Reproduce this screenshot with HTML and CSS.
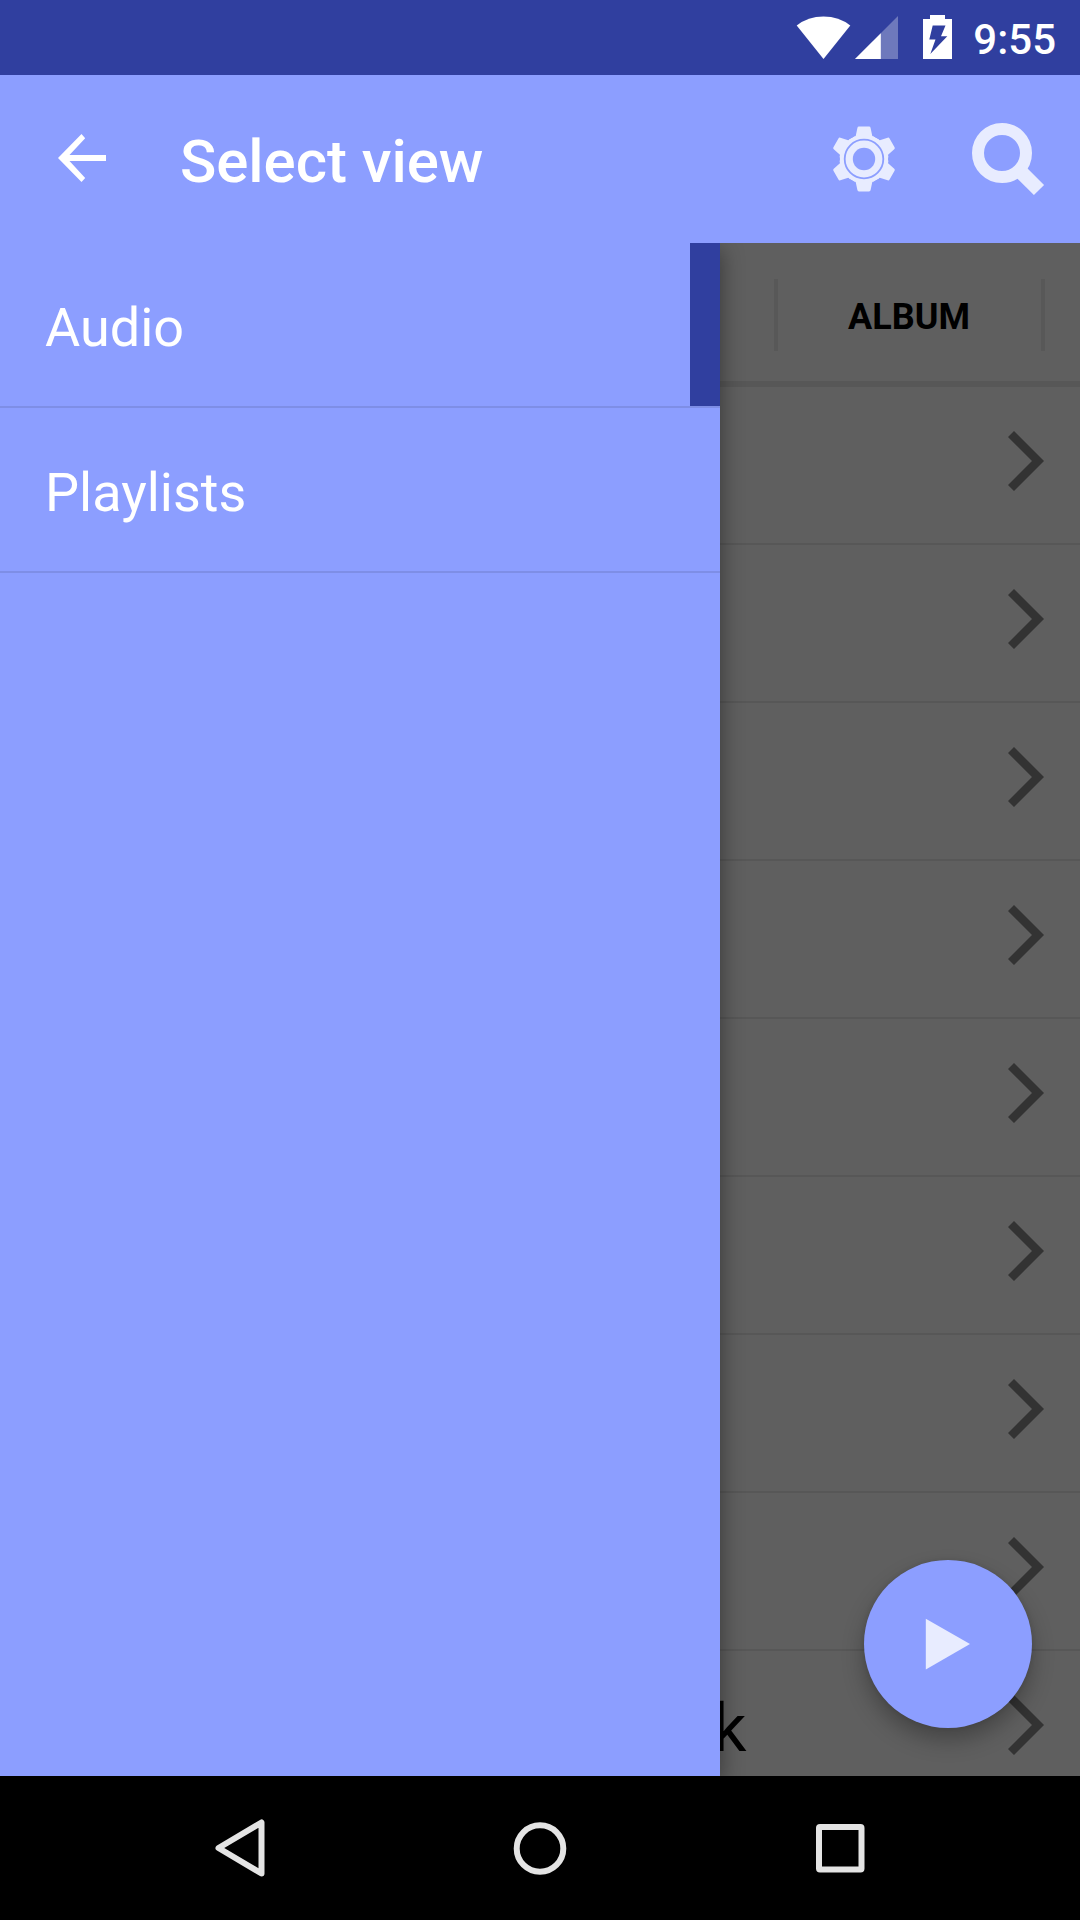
FILE: index.html
```html
<!DOCTYPE html>
<html lang="en">
<head>
<meta charset="utf-8">
<title>Select view</title>
<link rel="stylesheet" href="styles.css">
</head>
<body>
<div class="screen">
  <div class="status-bar">
    <svg class="status-icons" viewBox="790 0 170 75" width="170" height="75">
      <path fill="#fff" d="M823.5 59 796.7 25.5Q808 16.5 823.5 16.5T850.3 25.5Z"/>
      <path fill="#fff" opacity=".3" d="M855 59 898 16V59Z"/>
      <path fill="#fff" d="M855 59 880.8 33.2V59Z"/>
      <path fill="#fff" fill-rule="evenodd" d="M930 15h15v4h7v40h-29V19h7ZM932.7 25.5 929.3 39.5H935.5L930.3 54 947.3 36.3H941L945.5 25.5Z"/>
    </svg>
    <span class="clock">9:55</span>
  </div>
  <header class="app-bar">
    <svg class="back" width="48" height="48" viewBox="0 0 48 48"><path fill="#fff" d="M48 21H11.5L27.2 4.2 23.5 0 0 24 23.5 48 27.2 44 11.5 27H48Z"/></svg>
    <h1 class="title">Select view</h1>
    <svg class="gear" width="66" height="66" viewBox="-33 -33 66 66">
      <defs><path id="tooth" d="M0 0-15-19.5Q-12-20.5-8.3-23L-6.6-31.1Q-6.4-32.4-5-32.4H5Q6.4-32.4 6.6-31.1L8.3-23Q12-20.5 15-19.5Z"/></defs>
      <g fill="#e8ecff">
        <circle r="24"/>
        <use href="#tooth"/><use href="#tooth" transform="rotate(60)"/><use href="#tooth" transform="rotate(120)"/><use href="#tooth" transform="rotate(180)"/><use href="#tooth" transform="rotate(240)"/><use href="#tooth" transform="rotate(300)"/>
      </g>
      <circle r="19.3" fill="none" stroke="#8c9eff" stroke-width="1.8"/>
      <circle r="11.2" fill="#8c9eff"/>
    </svg>
    <svg class="search" width="73" height="73" viewBox="0 0 73 73">
      <circle cx="30" cy="30" r="24" fill="none" stroke="#e8ecff" stroke-width="12"/>
      <path d="M48 48 67 67" fill="none" stroke="#e8ecff" stroke-width="14.4"/>
    </svg>
  </header>
  <main class="content">
    <nav class="drawer">
      <div class="drawer-item selected">Audio</div>
      <div class="drawer-item">Playlists</div>
    </nav>
    <section class="library">
      <div class="tabs"><span class="tab-divider"></span><span class="tab">ALBUM</span><span class="tab-divider"></span></div>
      <div class="row"><svg class="chevron" viewBox="0 0 36 60"><path d="M6 0 36 30 6 60 0 54 24 30 0 6Z"/></svg></div>
      <div class="row"><svg class="chevron" viewBox="0 0 36 60"><path d="M6 0 36 30 6 60 0 54 24 30 0 6Z"/></svg></div>
      <div class="row"><svg class="chevron" viewBox="0 0 36 60"><path d="M6 0 36 30 6 60 0 54 24 30 0 6Z"/></svg></div>
      <div class="row"><svg class="chevron" viewBox="0 0 36 60"><path d="M6 0 36 30 6 60 0 54 24 30 0 6Z"/></svg></div>
      <div class="row"><svg class="chevron" viewBox="0 0 36 60"><path d="M6 0 36 30 6 60 0 54 24 30 0 6Z"/></svg></div>
      <div class="row"><svg class="chevron" viewBox="0 0 36 60"><path d="M6 0 36 30 6 60 0 54 24 30 0 6Z"/></svg></div>
      <div class="row"><svg class="chevron" viewBox="0 0 36 60"><path d="M6 0 36 30 6 60 0 54 24 30 0 6Z"/></svg></div>
      <div class="row"><svg class="chevron" viewBox="0 0 36 60"><path d="M6 0 36 30 6 60 0 54 24 30 0 6Z"/></svg></div>
      <div class="row"><span class="row-text">k</span><svg class="chevron" viewBox="0 0 36 60"><path d="M6 0 36 30 6 60 0 54 24 30 0 6Z"/></svg></div>
    </section>
    <div class="fab"><svg width="168" height="168" viewBox="0 0 168 168"><path fill="#e8ecff" d="M61.8 58.8 106 84 61.8 109.4Z"/></svg></div>
  </main>
  <footer class="nav-bar">
    <svg width="50" height="60" viewBox="0 0 50 60"><path d="M46.5 4.5V55.5L3.5 30Z"/></svg>
    <svg width="54" height="54" viewBox="0 0 54 54"><circle cx="27" cy="27.5" r="23.3"/></svg>
    <svg width="50" height="50" viewBox="0 0 50 50"><rect x="4" y="4" width="42.5" height="42.5" rx="1"/></svg>
  </footer>
</div>
</body>
</html>
```
FILE: styles.css
```css
* { box-sizing: border-box; }
body { margin: 0; font-family: Roboto, sans-serif; }
svg { display: block; flex: none; }
.screen { width: 1080px; height: 1920px; display: flex; flex-direction: column; overflow: hidden; background: #000; }
.status-bar { flex: none; height: 75px; background: #303f9f; display: flex; justify-content: flex-end; padding-right: 24px; }
.clock { width: 96px; padding-top: 4px; text-align: right; color: #fff; font-size: 42px; font-weight: 500; line-height: 72px; }
.app-bar { flex: none; height: 168px; background: #8c9eff; display: flex; align-items: flex-start; padding-left: 58px; }
.back { margin-top: 59px; }
.title { margin: 52px 0 0 74px; width: 651px; color: #fff; font-size: 60px; font-weight: 500; line-height: 70px; letter-spacing: -0.05px; }
.gear { margin-top: 51px; }
.search { margin: 48px 0 0 75px; }
.content { position: relative; flex: none; height: 1533px; display: flex; overflow: hidden; }
.drawer { position: relative; z-index: 1; flex: none; width: 720px; background: #8c9eff; box-shadow: 2px 6px 20px rgba(0, 0, 0, .38); }
.drawer-item { height: 165px; padding: 53px 0 0 45px; border-bottom: 2px solid #7e8ee6; color: #fff; font-size: 54px; line-height: 64px; }
.selected { background: linear-gradient(#303f9f, #303f9f) right / 30px 100% no-repeat; background-clip: padding-box; background-origin: padding-box; }
.library { width: 360px; background: #5f5f5f; }
.tabs { display: flex; height: 144px; padding: 36px 0 0 54px; border-bottom: 6px solid #575757; }
.tab-divider { width: 4px; height: 72px; background: #585858; }
.tab { width: 263px; padding-right: 1px; text-align: center; color: #000; font-size: 36px; font-weight: 700; line-height: 76px; }
.row { display: flex; height: 158px; padding: 44px 36px 0 0; border-bottom: 2px solid #575757; }
.chevron { width: 36px; height: 60px; margin-left: auto; fill: #333; }
.row-text { margin-left: -7px; padding-top: 1px; color: #000; font-size: 66px; line-height: 66px; }
.fab { position: absolute; z-index: 2; left: 864px; top: 1317px; width: 168px; height: 168px; border-radius: 50%; background: #8c9eff; box-shadow: 0 12px 22px rgba(0, 0, 0, .28), 0 0 5px rgba(0, 0, 0, .1); }
.nav-bar { flex: none; height: 144px; display: flex; justify-content: space-between; align-items: center; padding: 0 215px; fill: none; stroke: #e4e4e4; stroke-width: 6; stroke-linejoin: round; }
```
